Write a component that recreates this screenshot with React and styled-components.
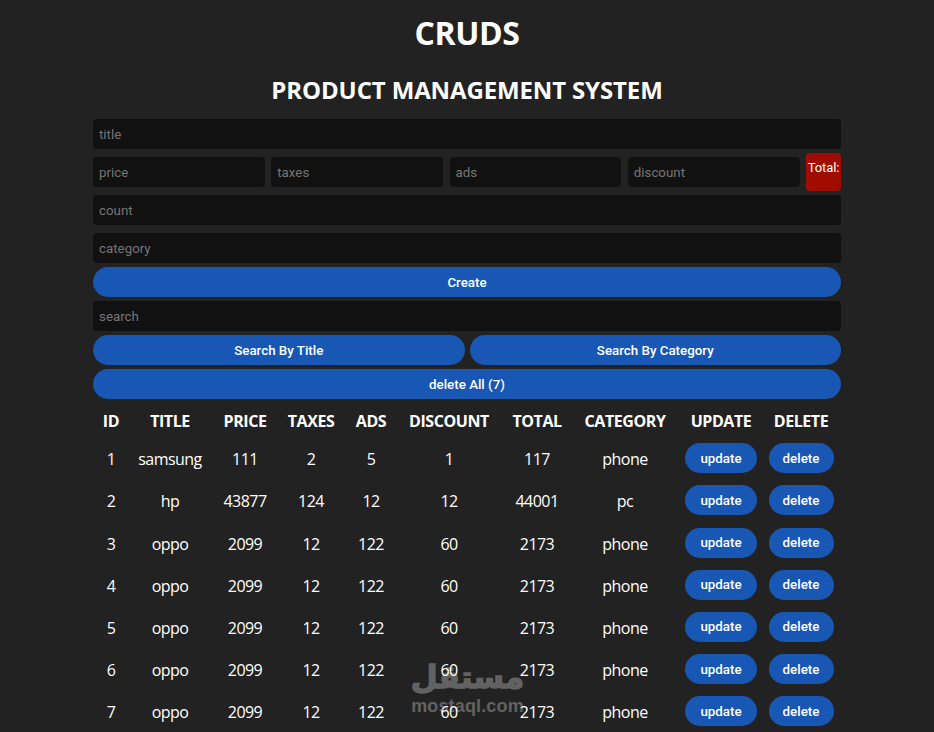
import React from "react";
import styled, { createGlobalStyle } from "styled-components";

const Global = createGlobalStyle`
  html, body { margin: 0; padding: 0; height: 732px; overflow: hidden; background: #222222; }
  body { color: #fff; font-family: "Open Sans", "Noto Sans", sans-serif; }
  * { box-sizing: border-box; }
`;
const Page = styled.div`
  position: relative;
  height: 732px;
  overflow: hidden;
  background: #222222;
`;
const Container = styled.main`
  position: relative;
  z-index: 1;
  width: 748px;
  margin: 0 auto;
  padding-top: 13px;
`;
const Header = styled.header`
  display: flex;
  flex-direction: column;
  align-items: center;
  gap: 21px;
  margin-bottom: 13px;
`;
const Title = styled.h1`
  margin: 0;
  font-size: 32px;
  line-height: 40px;
  font-weight: 700;
  letter-spacing: -0.4px;
`;
const Subtitle = styled.h2`
  margin: 0;
  font-size: 24px;
  line-height: 32px;
  font-weight: 700;
  letter-spacing: -0.13px;
`;
const Form = styled.section`
  display: flex;
  flex-direction: column;
  gap: 4px;
`;
const Field = styled.div`
  height: 30px;
  flex: ${p => (p.$grow ? "1 1 0" : "none")};
  min-width: 0;
  padding-left: 6px;
  display: flex;
  align-items: center;
  background: #111111;
  border-radius: 4px;
  color: #757575;
  font: 400 13.33px "Roboto", sans-serif;
`;
const PriceRow = styled.div`
  display: flex;
  align-items: center;
  gap: 6.4px;
  height: 38px;
`;
const TotalBadge = styled.div`
  width: 35px;
  height: 38px;
  flex: none;
  padding-top: 7px;
  background: #a00d00;
  border-radius: 4px;
  text-align: center;
  color: #fff;
  font: 400 13px/15px "Roboto", sans-serif;
  letter-spacing: -0.1px;
  white-space: nowrap;
`;
const FieldStack = styled.div`
  display: flex;
  flex-direction: column;
  gap: 8px;
`;
const PillButton = styled.button`
  display: block;
  width: 100%;
  height: 30px;
  padding: 0;
  border: 0;
  border-radius: 15px;
  background: #1957b5;
  color: #fff;
  font: 500 13.33px "Roboto", sans-serif;
`;
const SearchRow = styled.div`
  display: flex;
  gap: 5px;
`;
const HalfButton = styled(PillButton)`
  flex: 1 1 0;
  width: auto;
`;
const Table = styled.table`
  width: 742px;
  table-layout: fixed;
  border-collapse: collapse;
  margin-top: 5.1px;
  text-align: center;
`;
const HeadCell = styled.th`
  height: 34px;
  padding: 0;
  font-size: 16px;
  font-weight: 700;
  letter-spacing: -0.42px;
  white-space: nowrap;
`;
const Row = styled.tr`
  height: 42.2px;
`;
const Cell = styled.td`
  padding: 0;
  font-size: 16px;
  letter-spacing: -0.55px;
  color: #fff;
`;
const ActionButton = styled.button`
  display: block;
  width: ${p => p.$w}px;
  height: 30px;
  margin: -2px auto 0;
  padding: 0;
  border: 0;
  border-radius: 15px;
  background: #1957b5;
  color: #fff;
  font: 500 13.33px "Roboto", sans-serif;
`;
const Watermark = styled.div`
  position: absolute;
  z-index: 0;
  left: 410px;
  top: 654px;
  width: 115px;
  display: flex;
  flex-direction: column;
  align-items: center;
  color: #626262;
  pointer-events: none;
`;
const WatermarkArabic = styled.div`
  font: 700 31px/46px "DejaVu Sans", sans-serif;
  -webkit-text-stroke: 1.4px #626262;
  white-space: nowrap;
`;
const WatermarkLatin = styled.div`
  margin-top: -4px;
  font: 700 18px/20px "Liberation Sans", sans-serif;
  letter-spacing: 0.15px;
  white-space: nowrap;
`;

const columns = [
  ["ID", 36], ["TITLE", 82], ["PRICE", 68], ["TAXES", 64], ["ADS", 56],
  ["DISCOUNT", 100], ["TOTAL", 76], ["CATEGORY", 100], ["UPDATE", 92], ["DELETE", 68],
];
const rows = [
  [1, "samsung", 111, 2, 5, 1, 117, "phone"],
  [2, "hp", 43877, 124, 12, 12, 44001, "pc"],
  ...[3, 4, 5, 6, 7].map(id => [id, "oppo", 2099, 12, 122, 60, 2173, "phone"]),
];

export default function App() {
  return (
    <Page>
      <Global />
      <Watermark>
        <WatermarkArabic>مستقل</WatermarkArabic>
        <WatermarkLatin>mostaql.com</WatermarkLatin>
      </Watermark>
      <Container>
        <Header>
          <Title>CRUDS</Title>
          <Subtitle>PRODUCT MANAGEMENT SYSTEM</Subtitle>
        </Header>
        <Form>
          <Field>title</Field>
          <PriceRow>
            <Field $grow>price</Field>
            <Field $grow>taxes</Field>
            <Field $grow>ads</Field>
            <Field $grow>discount</Field>
            <TotalBadge>Total:</TotalBadge>
          </PriceRow>
          <FieldStack>
            <Field>count</Field>
            <Field>category</Field>
          </FieldStack>
          <PillButton>Create</PillButton>
          <Field>search</Field>
          <SearchRow>
            <HalfButton>Search By Title</HalfButton>
            <HalfButton>Search By Category</HalfButton>
          </SearchRow>
          <PillButton>delete All (7)</PillButton>
        </Form>
        <Table>
          <colgroup>
            {columns.map(([name, w]) => <col key={name} width={w} />)}
          </colgroup>
          <thead>
            <tr>{columns.map(([name]) => <HeadCell key={name}>{name}</HeadCell>)}</tr>
          </thead>
          <tbody>
            {rows.map(r => (
              <Row key={r[0]}>
                {r.map((v, i) => <Cell key={i}>{v}</Cell>)}
                <Cell><ActionButton $w={72}>update</ActionButton></Cell>
                <Cell><ActionButton $w={65}>delete</ActionButton></Cell>
              </Row>
            ))}
          </tbody>
        </Table>
      </Container>
    </Page>
  );
}
